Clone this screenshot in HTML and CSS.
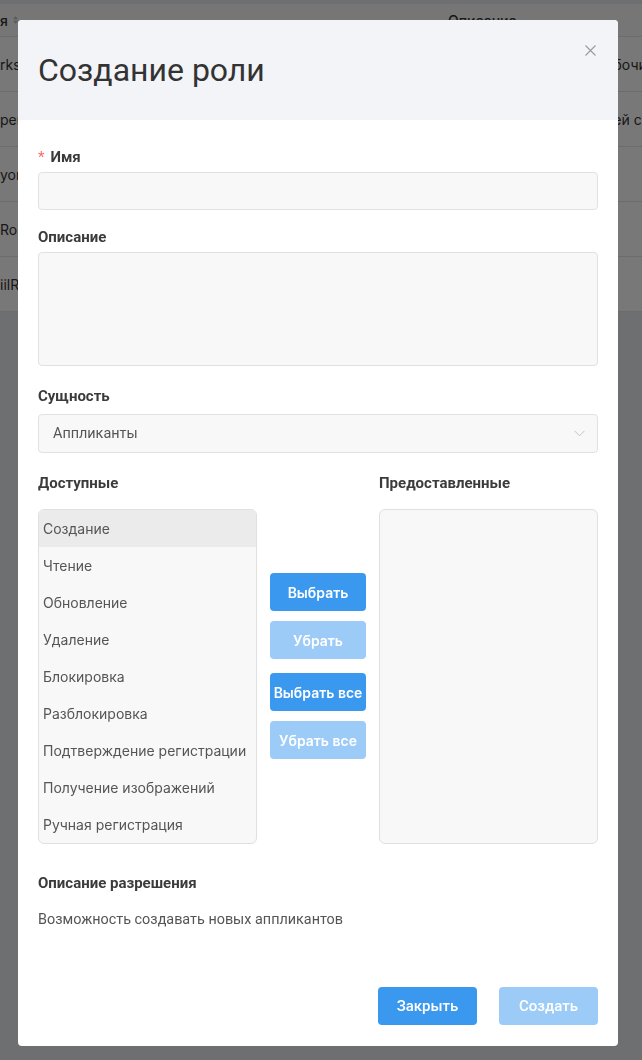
FILE: index.html
```html
<!DOCTYPE html>
<html lang="ru">
<head>
  <meta charset="UTF-8" />
  <meta name="viewport" content="width=device-width, initial-scale=1.0"/>
  <title>Роли</title>
  <link rel="stylesheet" href="styles.css">
</head>
<body>

<!-- page behind the modal (table of roles) -->
<div class="page">
  <div class="grid">
    <div class="grid-row grid-head">
      <div class="cell-name">
        <span>я</span>
        <svg class="sort" width="8" height="12" viewBox="0 0 8 12">
          <path d="M4 0 L8 5 H0 Z" fill="#bfbfbf"/>
          <path d="M0 7 H8 L4 12 Z" fill="#bfbfbf"/>
        </svg>
      </div>
      <div></div>
      <div class="cell-desc">Описание</div>
    </div>
    <div class="grid-row">
      <div class="cell-name">rks</div>
      <div></div>
      <div class="cell-desc">Роль для сотрудника рабочих групп</div>
    </div>
    <div class="grid-row">
      <div class="cell-name">perAdmin</div>
      <div></div>
      <div class="cell-desc">Управление правами всей системы</div>
    </div>
    <div class="grid-row">
      <div class="cell-name">yone</div>
      <div></div>
      <div class="cell-desc"></div>
    </div>
    <div class="grid-row">
      <div class="cell-name">Role</div>
      <div></div>
      <div class="cell-desc"></div>
    </div>
    <div class="grid-row">
      <div class="cell-name">iilRole</div>
      <div></div>
      <div class="cell-desc"></div>
    </div>
  </div>
</div>

<div class="overlay">
  <div class="modal">
    <div class="modal-header">
      <h1 class="modal-title">Создание роли</h1>
      <button class="close" type="button" aria-label="Закрыть">
        <svg width="11" height="11" viewBox="0 0 11 11">
          <path d="M0.5 0.5 L10.5 10.5 M10.5 0.5 L0.5 10.5" stroke="#9a9a9a" stroke-width="1.1" fill="none"/>
        </svg>
      </button>
    </div>

    <div class="modal-body">
      <div class="form-group">
        <label class="field-label" for="name"><span class="required">*</span>Имя</label>
        <input class="field" type="text" id="name">
      </div>

      <div class="form-group form-group-wide">
        <label class="field-label" for="desc">Описание</label>
        <textarea class="field field-area" id="desc"></textarea>
      </div>

      <div class="form-group">
        <label class="field-label field-label-select">Сущность</label>
        <div class="select">
          <span>Аппликанты</span>
          <svg width="11" height="7" viewBox="0 0 11 7">
            <path d="M0.5 0.8 L5.5 5.8 L10.5 0.8" stroke="#c4c4c4" stroke-width="1" fill="none"/>
          </svg>
        </div>
      </div>

      <div class="transfer">
        <div class="field-label transfer-label">Доступные</div>
        <div></div>
        <div class="field-label transfer-label">Предоставленные</div>

        <ul class="list">
          <li class="active">Создание</li>
          <li>Чтение</li>
          <li>Обновление</li>
          <li>Удаление</li>
          <li>Блокировка</li>
          <li>Разблокировка</li>
          <li>Подтверждение регистрации</li>
          <li>Получение изображений</li>
          <li>Ручная регистрация</li>
        </ul>

        <div class="transfer-actions">
          <div class="btn-pair">
            <button class="btn btn-small" type="button">Выбрать</button>
            <button class="btn btn-small btn-disabled" type="button">Убрать</button>
          </div>
          <div class="btn-pair">
            <button class="btn btn-small" type="button">Выбрать все</button>
            <button class="btn btn-small btn-disabled" type="button">Убрать все</button>
          </div>
        </div>

        <ul class="list"></ul>
      </div>

      <div class="perm">
        <div class="field-label">Описание разрешения</div>
        <p class="perm-text">Возможность создавать новых аппликантов</p>
      </div>
    </div>

    <div class="modal-footer">
      <button class="btn btn-footer" type="button">Закрыть</button>
      <button class="btn btn-footer btn-disabled" type="button">Создать</button>
    </div>
  </div>
</div>

</body>
</html>
```

FILE: styles.css
```css
body {
  margin: 0;
  font-family: 'Inter', 'Liberation Sans', sans-serif;
  background: #e9ebee;
  color: #333;
}

/* background page */
.page {
  padding-top: 4px;
}

.grid {
  background: #fff;
  font-size: 14px;
}

.grid-row {
  display: grid;
  grid-template-columns: 18px 430px 1fr;
  align-items: center;
  height: 54px;
  border-bottom: 1px solid #e6e6e6;
  white-space: nowrap;
  overflow: hidden;
}

.grid-head {
  height: 32px;
  background: #fafafa;
  font-weight: 500;
}

.cell-name {
  display: flex;
  align-items: center;
  gap: 5px;
}

.cell-desc {
  overflow: hidden;
}

/* modal */
.overlay {
  position: fixed;
  inset: 0;
  background: rgba(0, 0, 0, 0.53);
  padding: 20px 0 0 18px;
}

.modal {
  width: 600px;
  background: #fff;
  border-radius: 4px;
  overflow: hidden;
}

.modal-header {
  position: relative;
  height: 100px;
  background: #f3f4f8;
  display: flex;
  align-items: center;
  padding: 0 20px;
}

.modal-title {
  margin: 0;
  font-family: 'Roboto', sans-serif;
  font-weight: 400;
  font-size: 32px;
  color: #333;
}

.close {
  position: absolute;
  top: 25px;
  right: 22px;
  width: 11px;
  height: 11px;
  padding: 0;
  border: none;
  background: none;
  display: flex;
  cursor: pointer;
}

.modal-body {
  padding: 27px 20px 0;
}

.form-group {
  margin-bottom: 17px;
}

.form-group-wide {
  margin-bottom: 20px;
}

.field-label {
  display: block;
  font-family: 'Roboto', sans-serif;
  font-weight: 700;
  font-size: 15px;
  line-height: 20px;
  color: #3b3b3b;
  margin-bottom: 5px;
}

.field-label-select {
  margin-bottom: 8px;
}

.required {
  color: #f66;
  font-weight: 400;
  margin-right: 6px;
}

.field {
  display: block;
  width: 100%;
  height: 38px;
  box-sizing: border-box;
  background: #f8f8f8;
  border: 1px solid #e1e1e1;
  border-radius: 4px;
  font-family: inherit;
  font-size: 14px;
}

.field-area {
  height: 114px;
  resize: none;
}

.select {
  display: flex;
  align-items: center;
  justify-content: space-between;
  height: 39px;
  box-sizing: border-box;
  padding: 0 12px 0 14px;
  background: #f8f8f8;
  border: 1px solid #e1e1e1;
  border-radius: 4px;
  font-family: 'Roboto', sans-serif;
  font-size: 14.4px;
  color: #555;
}

.transfer {
  display: grid;
  grid-template-columns: 219px 96px 219px;
  column-gap: 13px;
  margin-top: 20px;
}

.transfer-label {
  margin-bottom: 16px;
}

.list {
  height: 333px;
  margin: 0;
  padding: 0;
  list-style: none;
  background: #f8f8f8;
  border: 1px solid #e0e0e0;
  border-radius: 6px;
  overflow: hidden;
}

.list li {
  height: 37px;
  line-height: 37px;
  padding-left: 4px;
  font-size: 14px;
  color: #555;
  white-space: nowrap;
}

.list li.active {
  background: #ebebeb;
}

.transfer-actions {
  display: flex;
  flex-direction: column;
  gap: 14px;
  padding-top: 64px;
}

.btn-pair {
  display: flex;
  flex-direction: column;
  gap: 10px;
}

.btn {
  height: 38px;
  border: none;
  border-radius: 4px;
  background: #3a98ef;
  color: #fff;
  cursor: pointer;
}

.btn-disabled {
  background: #9dcbf8;
}

.btn-small {
  padding: 0;
  font-family: 'Inter', sans-serif;
  font-weight: 600;
  font-size: 14px;
}

.perm {
  margin-top: 29px;
}

.perm-text {
  margin: 17px 0 0;
  font-family: 'Roboto', sans-serif;
  font-size: 14.4px;
  line-height: 20px;
  color: #555;
}

.modal-footer {
  display: flex;
  justify-content: flex-end;
  gap: 22px;
  padding: 57px 20px 21px;
}

.btn-footer {
  width: 99px;
  font-family: 'Roboto', sans-serif;
  font-weight: 500;
  font-size: 15px;
}
```
